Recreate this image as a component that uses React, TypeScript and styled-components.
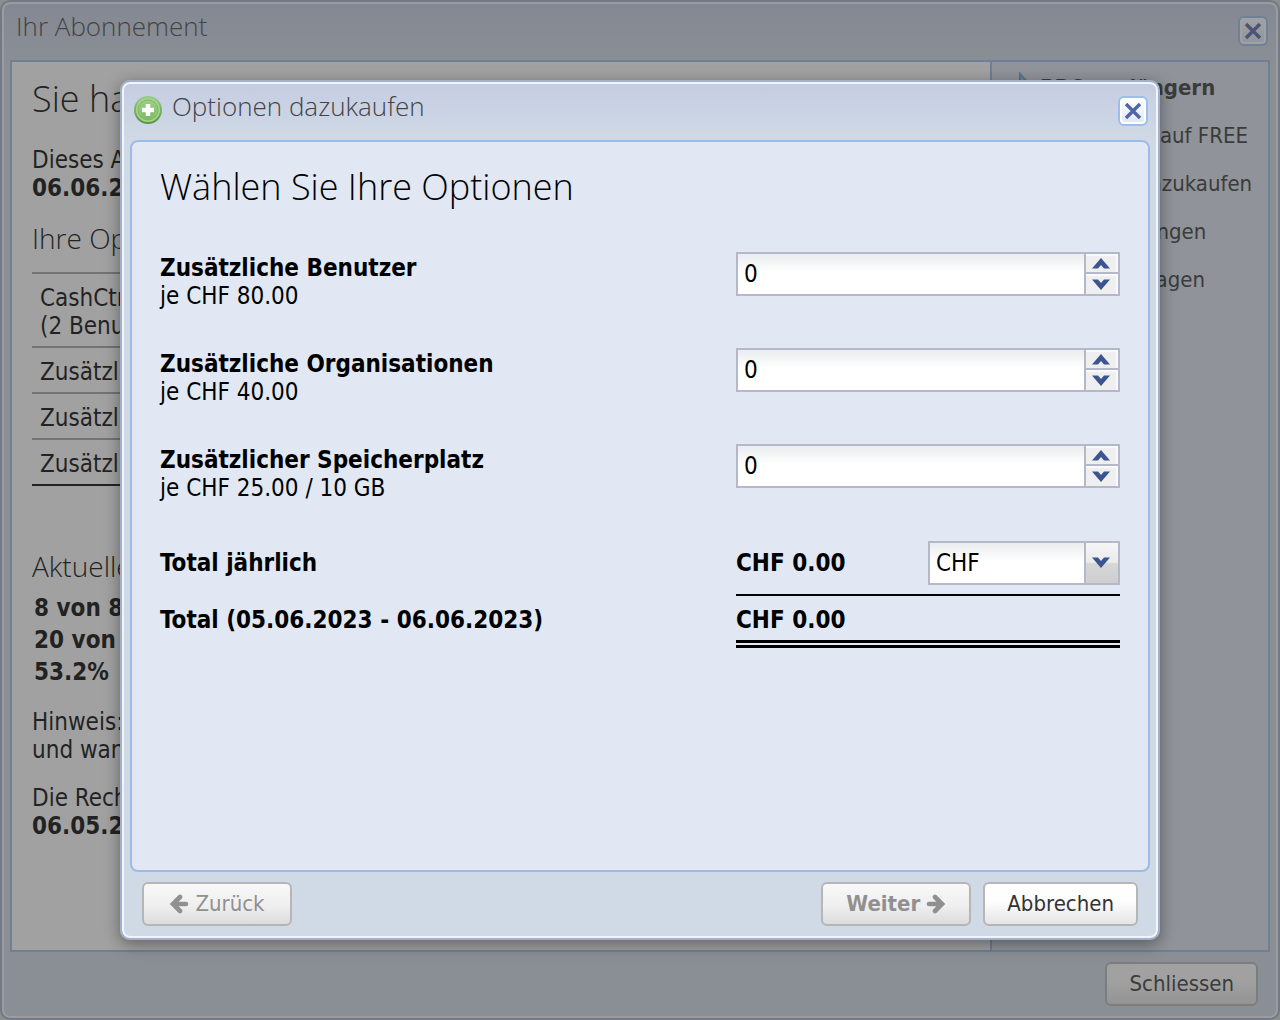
import React, { useId, useState } from "react";
import styled, { createGlobalStyle, css } from "styled-components";

const ui = `"DejaVu Sans Condensed", Tahoma, "DejaVu Sans", sans-serif`;
const display = `"Open Sans", "Noto Sans", sans-serif`;

const GlobalStyle = createGlobalStyle`
  *, *::before, *::after { box-sizing: border-box; }
  body {
    margin: 0;
    background: #d8d8d8;
    color: #000;
    font: 24px/28px ${ui};
  }
  button, input, select { font: inherit; color: inherit; margin: 0; }
  h1, h2, h3, p { margin: 0; }
`;

const Page = styled.div`
  position: relative;
  display: flex;
  min-height: 100vh;
`;

const frame = css`
  display: flex;
  flex-direction: column;
  padding: 0 8px 12px;
  border: 2px solid #a2b1c9;
  border-radius: 10px;
  box-shadow: inset 0 0 0 2px #f0f4fb;
  background: linear-gradient(#c5cce2, #d0dae6 60px);
`;

const Window = styled.section`
  ${frame}
  flex: 1;
`;

const TitleBar = styled.header<{ $inset: number }>`
  display: flex;
  align-items: flex-start;
  gap: 8px;
  height: 58px;
  padding: 6px 2px 0 ${(p) => p.$inset}px;
`;

const Title = styled.h2`
  flex: 1;
  color: #444;
  font: 300 26px/36px ${display};
`;

const TitleIcon = styled.span`
  display: flex;
  margin-top: 7px;
`;

const CloseButton = styled.button`
  display: grid;
  place-items: center;
  width: 30px;
  height: 30px;
  margin-top: 8px;
  padding: 0;
  border: 2px solid #9dbdec;
  border-radius: 6px;
  background: linear-gradient(#fff, #dbe8fb);
  box-shadow: inset 0 0 0 2px #fff;
`;

const Split = styled.div`
  flex: 1;
  display: flex;
  border: 2px solid #9dbbe8;
`;

const Summary = styled.main`
  flex: 1;
  min-width: 0;
  padding: 12px 20px;
  background: #fff;
`;

const Heading = styled.h1`
  font: 300 36px/50px ${display};
`;

const DialogHeading = styled(Heading)`
  margin-bottom: 40px;
`;

const SubHeading = styled.h3`
  font: 300 28px/40px ${display};
`;

const Paragraph = styled.p<{ $top: number }>`
  margin-top: ${(p) => p.$top}px;
`;

const OptionTable = styled.table`
  width: 100%;
  margin: 14px 0 60px;
  border-collapse: collapse;
  border-bottom: 2px solid #000;
  td {
    padding: 10px 8px 6px;
    border-top: 2px solid #a2a2a2;
  }
`;

const UsageList = styled.ul`
  margin: 6px 0 0;
  padding: 0 2px;
  list-style: none;
  font-weight: bold;
  line-height: 32px;
`;

const Sidebar = styled.nav`
  width: 278px;
  padding: 2px 12px;
  border-left: 2px solid #9dbbe8;
  background: #dde3ee;
`;

const SideLink = styled.a<{ $bold?: boolean }>`
  display: flex;
  align-items: center;
  gap: 4px;
  height: 48px;
  color: #333;
  font-size: 22px;
  font-weight: ${(p) => (p.$bold ? "bold" : "normal")};
  text-decoration: none;
  white-space: nowrap;
  svg { flex: none; }
`;

const Footer = styled.footer`
  display: flex;
  gap: 12px;
  padding: 10px 12px 0;
`;

const Spacer = styled.span`
  flex: 1;
`;

const Button = styled.button<{ $strong?: boolean }>`
  display: inline-flex;
  align-items: center;
  justify-content: center;
  gap: 6px;
  height: 44px;
  min-width: 150px;
  padding: 0 22px;
  border: 2px solid #b6b6b6;
  border-radius: 6px;
  background: linear-gradient(#fff, #fdfdfd 45%, #e4e4e4);
  color: #333;
  font-size: 22px;
  font-weight: ${(p) => (p.$strong ? "bold" : "normal")};
  &:disabled {
    color: #909090;
    background: linear-gradient(#f8f8f8, #efefef 55%, #dcdcdc);
  }
`;

const Overlay = styled.div`
  position: absolute;
  inset: 0;
  display: flex;
  align-items: center;
  justify-content: center;
  background: rgba(68, 68, 68, 0.5);
`;

const Dialog = styled.section`
  ${frame}
  width: 1040px;
  max-width: 100%;
  box-shadow: inset 0 0 0 2px #f0f4fb, 0 4px 16px rgba(0, 0, 0, 0.4);
`;

const DialogBody = styled.div`
  min-height: 732px;
  padding: 20px 28px;
  border: 2px solid #9dbbe8;
  border-radius: 8px;
  background: #e1e8f4;
`;

const Row = styled.div`
  display: grid;
  grid-template-columns: 3fr 2fr;
  height: 96px;
`;

const RowLabel = styled.label`
  padding-top: 2px;
  strong { display: block; }
`;

const Field = styled.div`
  display: flex;
  height: 44px;
  border: 2px solid #b5b8c8;
  background: linear-gradient(#e9edee, #fff 18px);
`;

const NumberInput = styled.input`
  flex: 1;
  min-width: 0;
  padding: 0 6px;
  border: 0;
  background: none;
`;

const Stepper = styled.div`
  display: grid;
  grid-template-rows: 18px 20px;
  gap: 2px;
  width: 34px;
  border-left: 2px solid #b5b8c8;
  background: #b5b8c8;
`;

const StepButton = styled.button`
  display: grid;
  place-items: center;
  padding: 0 2px 0 0;
  border: 0;
  background: #efefef;
  box-shadow: inset -1px 1px 0 1px #fafafa;
`;

const Totals = styled.div`
  display: grid;
  grid-template-columns: 3fr 2fr;
  font-weight: bold;
`;

const TotalCell = styled.div<{ $kind: "yearly" | "period"; $ruled?: boolean }>`
  display: flex;
  align-items: center;
  justify-content: space-between;
  ${(p) =>
    p.$kind === "yearly"
      ? css`height: 56px; padding-bottom: 8px; border-bottom: 2px solid;`
      : css`height: 52px; padding-top: 4px; border-bottom: 8px double;`}
  border-color: ${(p) => (p.$ruled ? "#000" : "transparent")};
`;

const SelectField = styled(Field)`
  position: relative;
  width: 192px;
  font-weight: normal;
`;

const Select = styled.select`
  width: 100%;
  padding: 0 6px;
  border: 0;
  background: none;
  appearance: none;
`;

const Trigger = styled.span`
  position: absolute;
  top: 0;
  right: 0;
  bottom: 0;
  display: grid;
  place-items: center;
  width: 34px;
  padding: 0 2px 2px 0;
  border-left: 2px solid #b5b8c8;
  background: linear-gradient(#f5f5f5, #ececec 48%, #d6d6d6 52%, #cfcfcf);
  pointer-events: none;
`;

const Chevron = ({ up = false }: { up?: boolean }) => (
  <svg width="18" height="11" viewBox="0 0 18 11" aria-hidden="true">
    <path d={up ? "M0 10.5 9 0l9 10.5h-6L9 7l-3 3.500z" : "M0 .5 9 11 18 .5h-6L9 4 6 .5z"} fill="#3a5590" />
  </svg>
);

const Cross = () => (
  <svg width="18" height="18" viewBox="0 0 18 18" aria-hidden="true">
    <path d="M2 2l14 14M16 2L2 16" stroke="#5264a8" strokeWidth="3.400" />
  </svg>
);

const Arrow = ({ left = false }: { left?: boolean }) => (
  <svg width="20" height="20" viewBox="0 0 20 20" aria-hidden="true">
    <path
      d={left ? "M11 3 4 10l7 7M4.500 10h12.500" : "M9 3l7 7-7 7M15.500 10H3"}
      fill="none" stroke="currentColor" strokeWidth="4.600" strokeLinecap="round"
    />
  </svg>
);

const AddIcon = () => (
  <svg width="30" height="30" viewBox="0 0 30 30" aria-hidden="true">
    <defs>
      <radialGradient id="add-fill" cx="50%" cy="75%" r="70%">
        <stop offset="0" stopColor="#79b85a" />
        <stop offset="1" stopColor="#9ccf86" />
      </radialGradient>
      <linearGradient id="add-rim" x1="0" y1="0" x2="0" y2="1">
        <stop offset="0" stopColor="#9acb86" />
        <stop offset="1" stopColor="#5b9645" />
      </linearGradient>
    </defs>
    <circle cx="14" cy="15" r="13" fill="#a5d58d" stroke="url(#add-rim)" strokeWidth="2" />
    <circle cx="14" cy="15" r="10" fill="url(#add-fill)" stroke="#7fb568" />
    <path d="M14 9v12M8 15h12" stroke="#fff" strokeWidth="4.500" />
  </svg>
);

const RenewIcon = () => (
  <svg width="32" height="32" viewBox="0 0 32 32" aria-hidden="true">
    <path d="M2 11h14V2l13 14-13 14v-9H2z" fill="#a9cdf0" stroke="#6ba3db" strokeWidth="2" />
  </svg>
);

const IconGap = styled.span`
  flex: none;
  width: 32px;
`;

const links = ["Downgrade auf FREE", "Optionen dazukaufen", "Alle Rechnungen", "Offerte anfragen"];

const OptionRow = ({ name, price }: { name: string; price: string }) => {
  const id = useId();
  const [count, setCount] = useState(0);
  return (
    <Row>
      <RowLabel htmlFor={id}><strong>{name}</strong>{price}</RowLabel>
      <Field>
        <NumberInput id={id} inputMode="numeric" value={count} onChange={(e) => setCount(Number(e.target.value) || 0)} />
        <Stepper>
          <StepButton type="button" onClick={() => setCount(count + 1)}><Chevron up /></StepButton>
          <StepButton type="button" onClick={() => setCount(Math.max(0, count - 1))}><Chevron /></StepButton>
        </Stepper>
      </Field>
    </Row>
  );
};

export default function App() {
  return (
    <>
      <GlobalStyle />
      <Page>
        <Window>
          <TitleBar $inset={6}>
            <Title>Ihr Abonnement</Title>
            <CloseButton type="button"><Cross /></CloseButton>
          </TitleBar>
          <Split>
            <Summary>
              <Heading>Sie haben</Heading>
              <Paragraph $top={22}>Dieses Abo<br /><b>06.06.2023</b></Paragraph>
              <Paragraph as={SubHeading} $top={16}>Ihre Optionen</Paragraph>
              <OptionTable>
                <tbody>
                  <tr><td>CashCtrl<br />(2 Benutzer)</td></tr>
                  <tr><td>Zusätzliche</td></tr>
                  <tr><td>Zusätzliche</td></tr>
                  <tr><td>Zusätzlicher</td></tr>
                </tbody>
              </OptionTable>
              <SubHeading>Aktuelle</SubHeading>
              <UsageList>
                <li>8 von 8</li>
                <li>20 von</li>
                <li>53.2%</li>
              </UsageList>
              <Paragraph $top={20}>Hinweis:<br />und wann</Paragraph>
              <Paragraph $top={20}>Die Rechnung<br /><b>06.05.2023</b></Paragraph>
            </Summary>
            <Sidebar>
              <SideLink href="#" $bold><RenewIcon />PRO verlängern</SideLink>
              {links.map((text) => (
                <SideLink href="#" key={text}><IconGap />{text}</SideLink>
              ))}
            </Sidebar>
          </Split>
          <Footer>
            <Spacer />
            <Button type="button">Schliessen</Button>
          </Footer>
        </Window>
        <Overlay>
          <Dialog role="dialog" aria-labelledby="dialog-title">
            <TitleBar $inset={4}>
              <TitleIcon><AddIcon /></TitleIcon>
              <Title id="dialog-title">Optionen dazukaufen</Title>
              <CloseButton type="button"><Cross /></CloseButton>
            </TitleBar>
            <DialogBody>
              <DialogHeading>Wählen Sie Ihre Optionen</DialogHeading>
              <OptionRow name="Zusätzliche Benutzer" price="je CHF 80.00" />
              <OptionRow name="Zusätzliche Organisationen" price="je CHF 40.00" />
              <OptionRow name="Zusätzlicher Speicherplatz" price="je CHF 25.00 / 10 GB" />
              <Totals>
                <TotalCell $kind="yearly">Total jährlich</TotalCell>
                <TotalCell $kind="yearly" $ruled>
                  CHF 0.00
                  <SelectField>
                    <Select aria-label="CHF" defaultValue="CHF"><option>CHF</option></Select>
                    <Trigger><Chevron /></Trigger>
                  </SelectField>
                </TotalCell>
                <TotalCell $kind="period">Total (05.06.2023 - 06.06.2023)</TotalCell>
                <TotalCell $kind="period" $ruled>CHF 0.00</TotalCell>
              </Totals>
            </DialogBody>
            <Footer>
              <Button type="button" disabled><Arrow left />Zurück</Button>
              <Spacer />
              <Button type="button" $strong disabled>Weiter<Arrow /></Button>
              <Button type="button">Abbrechen</Button>
            </Footer>
          </Dialog>
        </Overlay>
      </Page>
    </>
  );
}
